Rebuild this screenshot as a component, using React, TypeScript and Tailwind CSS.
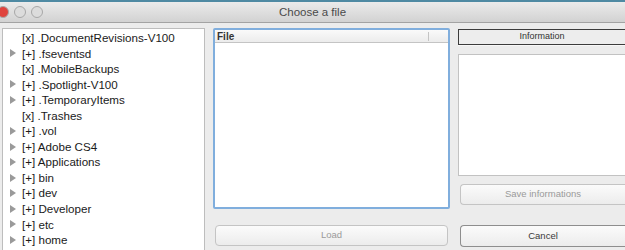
import React from "react";

type Node = { name: string; open: boolean };

const nodes: Node[] = [
  { name: ".DocumentRevisions-V100", open: false },
  { name: ".fseventsd", open: true },
  { name: ".MobileBackups", open: false },
  { name: ".Spotlight-V100", open: true },
  { name: ".TemporaryItems", open: true },
  { name: ".Trashes", open: false },
  { name: ".vol", open: true },
  { name: "Adobe CS4", open: true },
  { name: "Applications", open: true },
  { name: "bin", open: true },
  { name: "dev", open: true },
  { name: "Developer", open: true },
  { name: "etc", open: true },
  { name: "home", open: true },
];

const Light = ({ color }: { color: string }) => (
  <div
    className={`w-[12px] h-[12px] rounded-full border border-[#a8a8a8] ${color}`}
  />
);

const Triangle = () => (
  <svg width="6" height="8" viewBox="0 0 6 8" className="shrink-0">
    <path d="M0 0 L6 4 L0 8 Z" fill="#9a9a9a" />
  </svg>
);

const MacButton = ({
  label,
  disabled,
  className,
}: {
  label: string;
  disabled?: boolean;
  className: string;
}) => (
  <div
    className={`flex items-center justify-center rounded-[4px] border bg-gradient-to-b from-[#fbfbfb] to-[#ececec] text-[9.5px] ${
      disabled
        ? "border-[#c4c4c4] text-[#9a9a9a]"
        : "border-[#8e8e8e] text-[#3a3a3a]"
    } ${className}`}
  >
    {label}
  </div>
);

const App: React.FC = () => {
  return (
    <div
      className="w-[625px] h-[250px] overflow-hidden bg-[#ececec] flex flex-col"
      style={{ fontFamily: '"Lucida Grande", "Liberation Sans", sans-serif' }}
    >
      <div className="h-[2px] bg-[#4f8aa3] shrink-0" />
      <div className="h-[21px] shrink-0 relative flex items-center bg-gradient-to-b from-[#ebebeb] to-[#d2d2d2] border-b border-[#a3a3a3]">
        <div className="flex gap-[5px] ml-[-3px]">
          <Light color="bg-[#e0443e]" />
          <Light color="bg-[#dcdcdc]" />
          <Light color="bg-[#dcdcdc]" />
        </div>
        <div className="absolute inset-0 pt-[1px] flex items-center justify-center text-[11.5px] text-[#4a4a4a]">
          Choose a file
        </div>
      </div>
      <div className="flex-1 flex pt-[5px]">
        {/* tree */}
        <div className="w-[203px] ml-[2px] h-[240px] bg-white border border-[#bdbdbd] pt-[1px] text-[11.6px] text-[#1a1a1a]">
          {nodes.map((n) => (
            <div key={n.name} className="h-[15.55px] flex items-center">
              <div className="w-[19px] flex justify-center pl-[1px]">
                {n.open ? <Triangle /> : null}
              </div>
              <span className="whitespace-nowrap leading-none">
                {n.open ? "[+]" : "[x]"} {n.name}
              </span>
            </div>
          ))}
        </div>
        {/* middle */}
        <div className="ml-[8px] w-[237px] flex flex-col">
          <div className="h-[181px] bg-white border-[2px] border-[#80aedd] rounded-[2px] flex flex-col">
            <div className="h-[13px] flex items-center bg-gradient-to-b from-[#fafafa] to-[#ececec] border-b border-[#c4c4c4]">
              <span className="pl-[2px] text-[10px] font-bold text-[#333] w-[213px]">
                File
              </span>
              <div className="w-px h-[9px] bg-[#c4c4c4]" />
            </div>
          </div>
          <MacButton
            label="Load"
            disabled
            className="mt-[16px] ml-[2px] w-[233px] h-[21px]"
          />
        </div>
        {/* right */}
        <div className="ml-[8px] flex-1 flex flex-col">
          <div className="h-[16px] mt-[1px] flex items-center justify-center bg-[#ededed] border border-[#3c3c3c] border-r-0 text-[9px] text-[#333]">
            Information
          </div>
          <div className="h-px bg-[#f8f8f8]" />
          <div className="h-[122px] mt-[8px] bg-white border border-[#c2c2c2] border-r-0" />
          <MacButton
            label="Save informations"
            disabled
            className="mt-[8px] ml-[2px] h-[21px] rounded-r-none border-r-0"
          />
          <MacButton
            label="Cancel"
            className="mt-[20px] ml-[2px] h-[22px] rounded-r-none border-r-0"
          />
        </div>
      </div>
    </div>
  );
};

export default App;
